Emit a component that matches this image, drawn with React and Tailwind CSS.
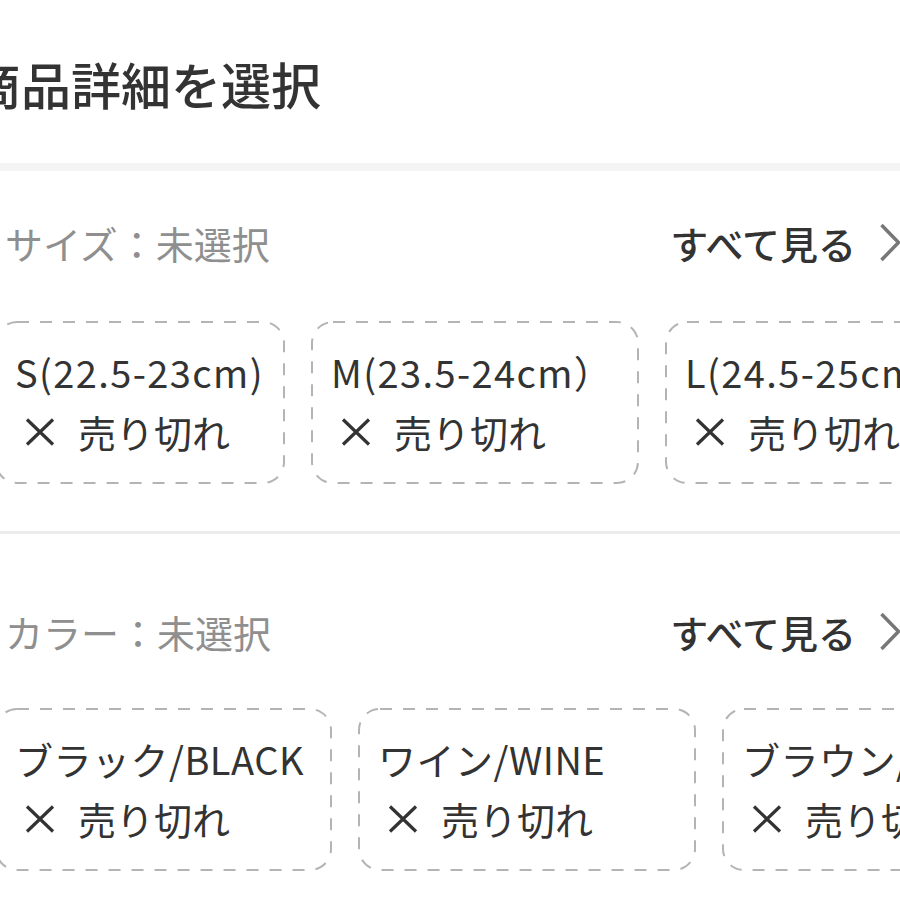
import React from "react";

const font = { fontFamily: '"Noto Sans CJK JP", "Noto Sans", sans-serif' };

const sizes = [
  { label: "S(22.5-23cm)", w: "w-[290px]" },
  { label: "M(23.5-24cm）", w: "w-[328px]" },
  { label: "L(24.5-25cm)", w: "w-[330px]" },
];

const colors = [
  { label: "ブラック/BLACK", w: "w-[337px]" },
  { label: "ワイン/WINE", w: "w-[338px]" },
  { label: "ブラウン/BROWN", w: "w-[330px]" },
];

function Cross() {
  return (
    <svg width="30" height="28" viewBox="0 0 30 28" className="shrink-0">
      <path d="M2 1.5 L28 26.5 M28 1.5 L2 26.5" stroke="#333" strokeWidth="3.2" fill="none" />
    </svg>
  );
}

function Chevron() {
  return (
    <svg width="22" height="40" viewBox="0 0 22 40" className="ml-[22px] shrink-0">
      <path d="M3.5 2 L20.5 19.5 L3.5 37" stroke="#777" strokeWidth="3.5" fill="none" />
    </svg>
  );
}

function OptionCard({ label, w, tracking }) {
  return (
    <div className={`relative shrink-0 ${w} h-[163px] pl-[20px] pt-[21px] text-[#333] text-[38px] leading-[60px]`}>
      {/* dashed outline drawn with svg to get the long dashes */}
      <svg className="absolute top-[1px] left-[1px] right-[1px] bottom-[1px] w-[calc(100%-2px)] h-[calc(100%-2px)] overflow-visible">
        <rect
          x="0"
          y="0"
          width="100%"
          height="100%"
          rx="21"
          fill="none"
          stroke="#b4b4b4"
          strokeWidth="2"
          strokeDasharray="12 11"
        />
      </svg>
      <div className={`whitespace-nowrap ${tracking}`}>{label}</div>
      <div className="flex items-center h-[60px] whitespace-nowrap">
        <span className="ml-[10px]">
          <Cross />
        </span>
        <span className="ml-[23px]">売り切れ</span>
      </div>
    </div>
  );
}

function Section({ title, items, top, cardsTop, tracking }) {
  return (
    <div>
      <div className={`flex items-center justify-between pl-[5px] ${top}`}>
        <span className="text-[38px] leading-[50px] text-[#8f8f8f] whitespace-nowrap">{title}</span>
        <div className="flex items-center">
          <span className="text-[38px] leading-[50px] text-[#333] font-medium whitespace-nowrap">すべて見る</span>
          <Chevron />
        </div>
      </div>
      <div className={`flex gap-[26px] -ml-[5px] ${cardsTop}`}>
        {items.map((it) => (
          <OptionCard key={it.label} label={it.label} w={it.w} tracking={tracking} />
        ))}
      </div>
    </div>
  );
}

export default function App() {
  return (
    <div className="w-[900px] h-[900px] overflow-hidden bg-white" style={font}>
      <div className="h-[163px] pt-[53px]">
        <h1 className="-ml-[29px] text-[50px] leading-[60px] font-medium text-[#333] whitespace-nowrap">
          商品詳細を選択
        </h1>
      </div>
      <div className="h-[8px] bg-[#f4f4f4]" />

      <Section
        title="サイズ：未選択"
        items={sizes}
        top="pt-[47px]"
        cardsTop="mt-[53px]"
        tracking="tracking-[1.4px]"
      />

      <div className="mt-[47px] h-[3px] bg-[#ececec]" />

      <Section
        title="カラー：未選択"
        items={colors}
        top="pt-[73px]"
        cardsTop="mt-[51px]"
        tracking="tracking-[0.5px]"
      />
    </div>
  );
}
